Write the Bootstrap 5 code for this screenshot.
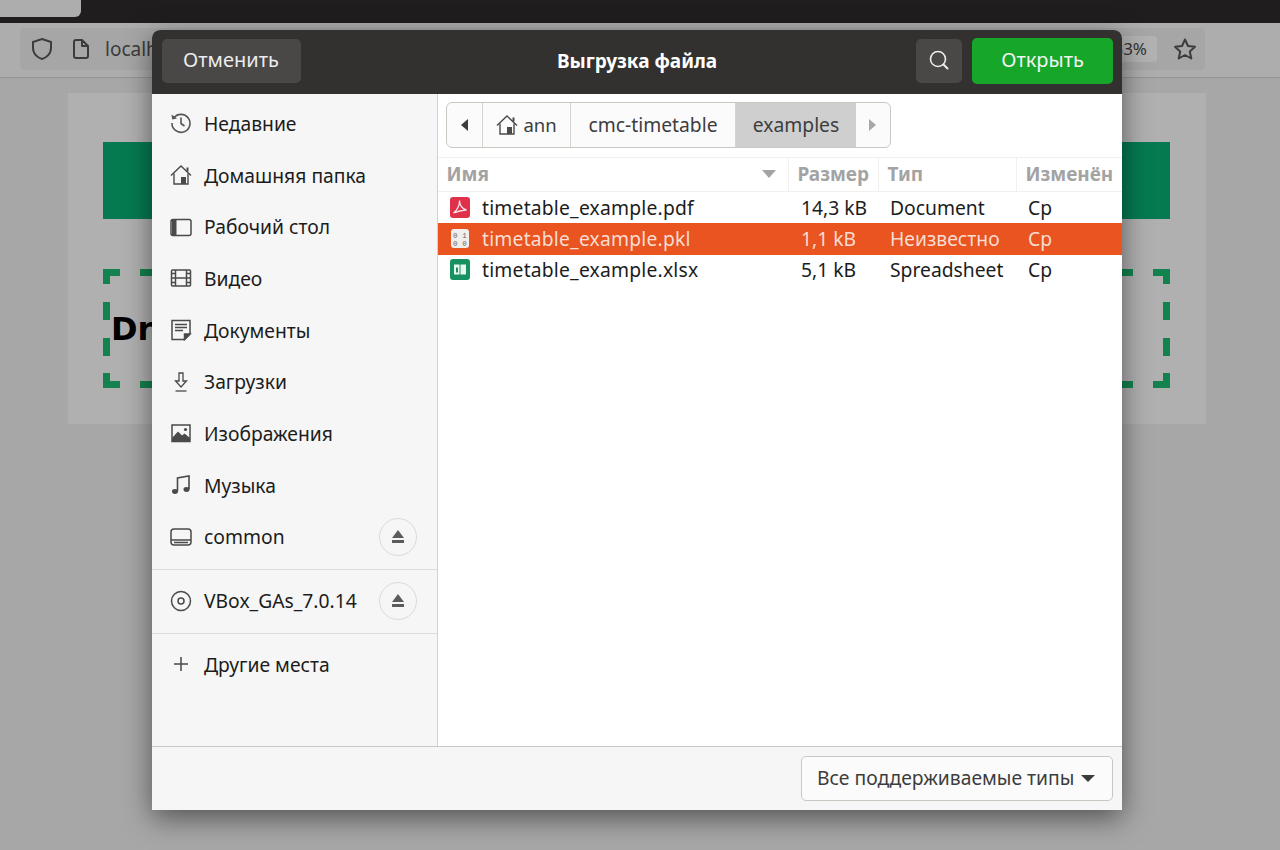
<!DOCTYPE html>
<html lang="ru">
<head>
  <meta charset="UTF-8" />
  <meta name="viewport" content="width=device-width, initial-scale=1" />
  <title>Выгрузка файла</title>
  <link href="https://cdn.jsdelivr.net/npm/bootstrap@5.3.3/dist/css/bootstrap.min.css" rel="stylesheet" />
  <style>
    body {
      background-color: #a7a7a7;
      height: 850px;
      overflow: hidden;
      position: relative;
      font-family: "Noto Sans", "Open Sans", sans-serif;
    }

    /* browser behind the dialog */
    .tab-strip { height: 23px; background-color: #1f1d1e; }
    .tab-active { width: 81px; height: 17px; background-color: #adadad; border-bottom-right-radius: 6px; }
    .tool-strip { height: 55px; background-color: #adadad; border-bottom: 1px solid #949494; padding: 5px 75px 7px 20px; }
    .url-box { height: 42px; background-color: #a6a6a6; border-radius: 5px; padding-left: 11px; color: #3c3c3c; font-size: 19px; }
    .url-doc { margin-left: 19px; }
    .url-text { margin-left: 15px; }
    .zoom-pill { background-color: #b2b2b2; border-radius: 4px; font-size: 17px; padding: 0 10px 0 0; margin-left: auto; margin-right: 16px; color: #333; }
    .page-panel { margin: 15px 74px 0 68px; height: 331px; background-color: #b0b0b0; padding: 49px 36px 0 35px; }
    .green-bar { height: 77px; background-color: #057a51; }
    .drop-box {
      height: 119px;
      margin-top: 50px;
      padding-left: 8px;
      font-family: "DejaVu Sans", sans-serif;
      font-weight: 700;
      font-size: 32px;
      color: #000;
      background:
        linear-gradient(90deg, #14824f 0 17px, transparent 17px 37px, #14824f 37px 54px, transparent 54px) left top / 100px 7px no-repeat,
        linear-gradient(90deg, #14824f 0 17px, transparent 17px 37px, #14824f 37px 54px, transparent 54px) left bottom / 100px 7px no-repeat,
        linear-gradient(270deg, #14824f 0 17px, transparent 17px 37px, #14824f 37px 54px, transparent 54px) right top / 100px 7px no-repeat,
        linear-gradient(270deg, #14824f 0 17px, transparent 17px 37px, #14824f 37px 54px, transparent 54px) right bottom / 100px 7px no-repeat,
        linear-gradient(180deg, #14824f 0 15px, transparent 15px 33px, #14824f 33px 51px, transparent 51px 69px, #14824f 69px 87px, transparent 87px 104px, #14824f 104px) left top / 7px 100% no-repeat,
        linear-gradient(180deg, #14824f 0 15px, transparent 15px 33px, #14824f 33px 51px, transparent 51px 69px, #14824f 69px 87px, transparent 87px 104px, #14824f 104px) right top / 7px 100% no-repeat;
    }

    /* file chooser */
    .file-dialog {
      position: absolute;
      left: 152px;
      top: 30px;
      width: 970px;
      height: 780px;
      border-radius: 8px 8px 0 0;
      box-shadow: 0 8px 28px rgba(0, 0, 0, 0.5);
      background-color: #fff;
      overflow: hidden;
      font-size: 19.3px;
      color: #1c1c1c;
    }
    .dlg-head { height: 64px; background-color: #333030; padding: 0 9px 0 9.5px; }
    .dlg-btn { height: 44px; background-color: #4a4747; color: #ececec; border: 0; border-radius: 5px; font-size: 20px; line-height: 1; padding: 0 0 2px; margin-bottom: 2px; }
    .dlg-btn:hover { background-color: #4a4747; color: #ececec; }
    .btn-cancel { width: 139px; }
    .btn-search { width: 46px; margin-left: auto; }
    .btn-open { width: 141px; height: 46px; background-color: #16a72a; color: #f2f2f2; margin-left: 10px; }
    .btn-open:hover { background-color: #16a72a; color: #f2f2f2; }
    .dlg-title { position: absolute; left: 0; right: 0; top: 17px; text-align: center; color: #fff; font-weight: 700; font-size: 19px; pointer-events: none; }

    .dlg-body { height: 652px; }
    .side-pane { width: 286px; background-color: #f6f6f6; border-right: 1px solid #d3d0cd; }
    .side-item { height: 51.7px; padding-left: 18px; padding-top: 1px; color: #1c1c1c; }
    .side-item svg { width: 22px; height: 22px; margin: -2px 12px 0 0; flex-shrink: 0; }
    .side-top { padding-top: 4px; padding-bottom: 6px; }
    .side-sep { border-top: 1px solid #dedcda; height: 63.5px; }
    .eject-btn { width: 38px; height: 38px; border: 1px solid #dcdad8; border-radius: 50%; margin: -2px 20px 0 auto; }
    .eject-btn svg { width: 12px; height: 13px; margin: 0; }

    .main-pane { width: 684px; }
    .path-bar { margin: 8px 0 0 8px; width: 445px; height: 46px; border: 1px solid #cdc7c2; border-radius: 6px; overflow: hidden; color: #3d3d3d; background-color: #fbfbfb; }
    .path-seg { border-right: 1px solid #d6d2ce; height: 100%; }
    .seg-back { width: 36px; }
    .seg-ann { width: 88px; font-size: 18.5px; }
    .seg-ann svg { width: 22px; height: 22px; margin-right: 5px; }
    .seg-cmc { width: 165px; }
    .seg-cur { width: 120px; background-color: #cfcfcf; border-right: 0; }
    .seg-fwd { width: 34px; border-right: 0; }

    .file-head, .file-row { display: grid; grid-template-columns: 351px 90px 138px 105px; align-items: center; }
    .file-head { height: 35px; margin-top: 9px; border-top: 1px solid #f1f0ef; border-bottom: 1px solid #f1f0ef; color: #a3a3a3; font-weight: 700; font-size: 19px; }
    .head-cell { height: 100%; padding-left: 8.5px; padding-bottom: 1px; border-right: 1px solid #f1f0ef; }
    .head-cell:last-child { border-right: 0; }
    .head-cell svg { width: 14px; height: 8px; margin-left: auto; margin-right: 12px; }
    .file-row { height: 31.3px; }
    .file-row > div { padding-top: 1px; }
    .file-row svg { width: 20px; height: 21px; margin: -2px 12px 0 12px; flex-shrink: 0; }
    .file-name { letter-spacing: 0.2px; }
    .cell-size { padding-left: 12px; }
    .cell-type { padding-left: 11px; }
    .cell-date { padding-left: 11px; }
    .row-sel { background-color: #e95420; color: #f7ddd2; }

    .dlg-foot { height: 64px; background-color: #f6f6f6; border-top: 1px solid #c9c7c5; padding-right: 9px; }
    .type-select { width: 312px; height: 45px; margin-bottom: 1px; background-color: #fbfbfb; border: 1px solid #cdc7c2; border-radius: 5px; padding-left: 15px; color: #3d3d3d; }
    .type-caret { width: 0; height: 0; margin-left: 7px; border-left: 7px solid transparent; border-right: 7px solid transparent; border-top: 7px solid #3d3d3d; }
  </style>
</head>
<body>

<!-- Browser behind -->
<div class="tab-strip"><div class="tab-active"></div></div>
<div class="tool-strip">
  <div class="url-box d-flex align-items-center">
    <svg width="22" height="24" viewBox="0 0 22 24" fill="none" stroke="#3c3c3c" stroke-width="2"><path d="M11 2 L20 5 V11 C20 17 15 21 11 22 C7 21 2 17 2 11 V5 Z"/></svg>
    <svg class="url-doc" width="18" height="20" viewBox="0 0 18 20" fill="none" stroke="#3c3c3c" stroke-width="2" stroke-linejoin="round"><path d="M2 3 a2 2 0 0 1 2-2 h6 l6 6 v10 a2 2 0 0 1-2 2 H4 a2 2 0 0 1-2-2 Z M10 1 v6 h6"/></svg>
    <span class="url-text">localhost</span>
    <span class="zoom-pill">133%</span>
    <svg class="me-2" width="24" height="24" viewBox="0 0 24 24" fill="none" stroke="#3c3c3c" stroke-width="2" stroke-linejoin="round"><path d="M12 2.5 L15 9 L22 9.8 L16.8 14.5 L18.3 21.5 L12 18 L5.7 21.5 L7.2 14.5 L2 9.8 L9 9 Z"/></svg>
  </div>
</div>
<div class="page-panel">
  <div class="green-bar"></div>
  <div class="drop-box d-flex align-items-center">Dr</div>
</div>

<!-- File dialog -->
<div class="file-dialog d-flex flex-column">
  <div class="dlg-head d-flex align-items-center position-relative">
    <button class="btn dlg-btn btn-cancel" type="button">Отменить</button>
    <div class="dlg-title">Выгрузка файла</div>
    <button class="btn dlg-btn btn-search d-flex align-items-center justify-content-center" type="button" aria-label="Поиск">
      <svg width="22" height="22" viewBox="0 0 22 22" fill="none" stroke="#ececec" stroke-width="1.6" stroke-linecap="round"><circle cx="10" cy="10" r="7.5"/><path d="M15.5 15.5 L19.5 19.5" stroke-width="2"/></svg>
    </button>
    <button class="btn dlg-btn btn-open" type="button">Открыть</button>
  </div>

  <div class="dlg-body d-flex">
    <div class="side-pane">
      <div class="side-top">
        <div class="side-item d-flex align-items-center">
          <svg viewBox="0 0 22 22" fill="none" stroke="#555" stroke-width="1.6"><path d="M3.6 6.2 A9 9 0 1 1 2 11"/><path d="M1.5 2.5 L2.2 7.5 L7 6.6" fill="#555" stroke="none"/><path d="M11 5.5 V11.5 L14.5 14"/></svg>
          Недавние
        </div>
        <div class="side-item d-flex align-items-center">
          <svg viewBox="0 0 22 22" fill="none" stroke="#4a4a4a" stroke-width="1.4"><path d="M1 11.5 L11 2 L21 11.5"/><path d="M4 9.5 V20 H18 V9.5"/><rect x="11" y="13" width="5" height="7" fill="#4a4a4a" stroke="none"/><rect x="16.5" y="3.5" width="2" height="4" fill="#4a4a4a" stroke="none"/></svg>
          Домашняя папка
        </div>
        <div class="side-item d-flex align-items-center">
          <svg viewBox="0 0 22 22"><rect x="1" y="3.5" width="20" height="16" rx="2" fill="none" stroke="#4a4a4a" stroke-width="1.5"/><path d="M2 4 H6.5 V19 H2 Z" fill="#4a4a4a"/></svg>
          Рабочий стол
        </div>
        <div class="side-item d-flex align-items-center">
          <svg viewBox="0 0 22 22" fill="none" stroke="#4a4a4a" stroke-width="1.5"><rect x="1.5" y="3" width="19" height="16" rx="1"/><path d="M5.5 3 V19 M16.5 3 V19 M5.5 11 H16.5 M1.5 6.5 H5.5 M1.5 11 H5.5 M1.5 15.5 H5.5 M16.5 6.5 H20.5 M16.5 11 H20.5 M16.5 15.5 H20.5"/></svg>
          Видео
        </div>
        <div class="side-item d-flex align-items-center">
          <svg viewBox="0 0 22 22" fill="none" stroke="#4a4a4a" stroke-width="1.5"><path d="M2 1.5 H20 V15 L14.5 20.5 H2 Z"/><path d="M5 5.5 H17 M5 8.5 H17 M5 11.5 H13" stroke-width="1.3"/><path d="M20 15 H14.5 V20.5 Z" fill="#4a4a4a"/></svg>
          Документы
        </div>
        <div class="side-item d-flex align-items-center">
          <svg viewBox="0 0 22 22" fill="none" stroke="#4a4a4a" stroke-width="1.3"><path d="M9 2 H13 V10 H16.5 L11 16 L5.5 10 H9 Z"/><path d="M5.5 20 H16.5"/></svg>
          Загрузки
        </div>
        <div class="side-item d-flex align-items-center">
          <svg viewBox="0 0 22 22"><rect x="2" y="3" width="18" height="16.5" fill="none" stroke="#4a4a4a" stroke-width="1.5"/><path d="M2 19.5 V16 L8 9.5 L12 13.5 L14.5 11.5 L20 16 V19.5 Z" fill="#4a4a4a"/><circle cx="15.5" cy="7.5" r="1.6" fill="#4a4a4a"/></svg>
          Изображения
        </div>
        <div class="side-item d-flex align-items-center">
          <svg viewBox="0 0 22 22" fill="none" stroke="#4a4a4a" stroke-width="1.6"><path d="M7.5 17 V4 L19 2 V15"/><ellipse cx="5" cy="17.5" rx="3" ry="2.4" fill="#4a4a4a" stroke="none"/><ellipse cx="16.5" cy="15.5" rx="3" ry="2.4" fill="#4a4a4a" stroke="none"/></svg>
          Музыка
        </div>
        <div class="side-item d-flex align-items-center">
          <svg viewBox="0 0 22 22" fill="none" stroke="#4a4a4a" stroke-width="1.5"><rect x="1" y="3" width="20" height="16" rx="3"/><path d="M1 14 H21 M4 16.5 H18"/></svg>
          common
          <div class="eject-btn d-flex align-items-center justify-content-center">
            <svg viewBox="0 0 12 13"><path d="M6 0 L12 8 H0 Z M0 10 H12 V13 H0 Z" fill="#5c5c5c"/></svg>
          </div>
        </div>
      </div>
      <div class="side-sep d-flex align-items-center side-item">
        <svg viewBox="0 0 22 22" fill="none" stroke="#4a4a4a" stroke-width="1.5"><circle cx="11" cy="11" r="9.5"/><circle cx="11" cy="11" r="3"/></svg>
        VBox_GAs_7.0.14
        <div class="eject-btn d-flex align-items-center justify-content-center">
          <svg viewBox="0 0 12 13"><path d="M6 0 L12 8 H0 Z M0 10 H12 V13 H0 Z" fill="#5c5c5c"/></svg>
        </div>
      </div>
      <div class="side-sep d-flex align-items-center side-item">
        <svg viewBox="0 0 22 22" fill="none" stroke="#4a4a4a" stroke-width="1.5"><path d="M11 4 V18 M4 11 H18"/></svg>
        Другие места
      </div>
    </div>

    <div class="main-pane">
      <div class="path-bar d-flex">
        <div class="path-seg seg-back d-flex align-items-center justify-content-center">
          <svg width="8" height="12" viewBox="0 0 8 12"><path d="M7 0 V12 L0 6 Z" fill="#3d3d3d"/></svg>
        </div>
        <div class="path-seg seg-ann d-flex align-items-center justify-content-center">
          <svg viewBox="0 0 22 22" fill="none" stroke="#4a4a4a" stroke-width="1.4"><path d="M1 11.5 L11 2 L21 11.5"/><path d="M4 9.5 V20 H18 V9.5"/><rect x="11" y="13" width="5" height="7" fill="#4a4a4a" stroke="none"/><rect x="16.5" y="3.5" width="2" height="4" fill="#4a4a4a" stroke="none"/></svg>
          ann
        </div>
        <div class="path-seg seg-cmc d-flex align-items-center justify-content-center">cmc-timetable</div>
        <div class="path-seg seg-cur d-flex align-items-center justify-content-center">examples</div>
        <div class="path-seg seg-fwd d-flex align-items-center justify-content-center">
          <svg width="8" height="12" viewBox="0 0 8 12"><path d="M0 0 V12 L7 6 Z" fill="#a8a8a8"/></svg>
        </div>
      </div>

      <div class="file-head">
        <div class="head-cell d-flex align-items-center">Имя
          <svg viewBox="0 0 14 8"><path d="M0 0 H14 L7 8 Z" fill="#a3a3a3"/></svg>
        </div>
        <div class="head-cell d-flex align-items-center">Размер</div>
        <div class="head-cell d-flex align-items-center">Тип</div>
        <div class="head-cell d-flex align-items-center">Изменён</div>
      </div>

      <div class="file-row">
        <div class="file-name d-flex align-items-center">
          <svg viewBox="0 0 20 21"><rect width="20" height="21" rx="3" fill="#e0314a"/><path d="M3.5 16 C7 13.5 10 8 9.5 3.5 C9.5 8 12.5 12.5 16.5 13 C12 13 7.5 14.5 3.5 16 Z" fill="none" stroke="#fbe4e8" stroke-width="1.3"/></svg>
          timetable_example.pdf
        </div>
        <div class="cell-size">14,3 kB</div>
        <div class="cell-type">Document</div>
        <div class="cell-date">Ср</div>
      </div>
      <div class="file-row row-sel">
        <div class="file-name d-flex align-items-center">
          <svg viewBox="0 0 20 21"><rect x="1" y="1" width="18" height="19" rx="3" fill="#f1efed"/><text x="10" y="9.5" font-size="7.5" text-anchor="middle" fill="#666" font-family="Liberation Mono, monospace">0 1</text><text x="10" y="17.5" font-size="7.5" text-anchor="middle" fill="#666" font-family="Liberation Mono, monospace">0 0</text></svg>
          timetable_example.pkl
        </div>
        <div class="cell-size">1,1 kB</div>
        <div class="cell-type">Неизвестно</div>
        <div class="cell-date">Ср</div>
      </div>
      <div class="file-row">
        <div class="file-name d-flex align-items-center">
          <svg viewBox="0 0 20 21"><rect width="20" height="21" rx="3" fill="#17915f"/><rect x="4" y="5.5" width="5.5" height="10" fill="#eaf6f0"/><rect x="10.5" y="5.5" width="5.5" height="10" fill="#eaf6f0"/><rect x="6" y="8.5" width="2" height="5" fill="#17915f"/></svg>
          timetable_example.xlsx
        </div>
        <div class="cell-size">5,1 kB</div>
        <div class="cell-type">Spreadsheet</div>
        <div class="cell-date">Ср</div>
      </div>
    </div>
  </div>

  <div class="dlg-foot d-flex align-items-center justify-content-end">
    <div class="type-select d-flex align-items-center">Все поддерживаемые типы<span class="type-caret"></span></div>
  </div>
</div>

<script src="https://cdn.jsdelivr.net/npm/bootstrap@5.3.3/dist/js/bootstrap.bundle.min.js"></script>
</body>
</html>
